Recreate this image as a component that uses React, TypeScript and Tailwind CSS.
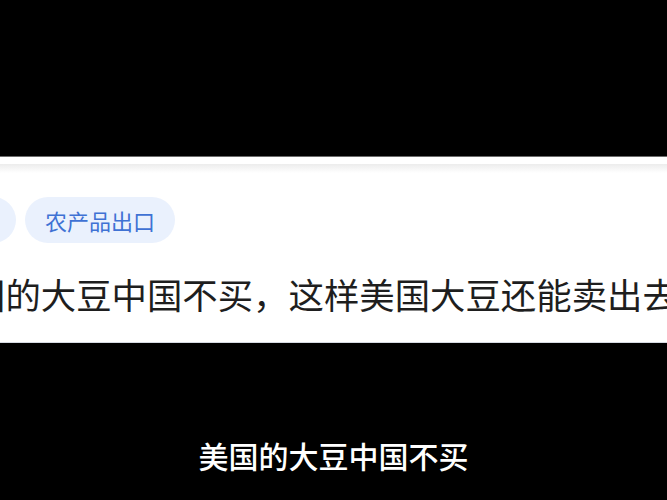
import React from "react";

export default function App() {
  const font = { fontFamily: '"Noto Sans CJK SC", "Noto Sans", sans-serif' };
  return (
    <div className="w-[667px] h-[500px] bg-black overflow-hidden relative" style={font}>
      <div className="h-[156px] bg-black" />
      <div className="h-[1px] bg-[#6b6b6b]" />
      <div className="h-[186px] bg-white overflow-hidden flex flex-col">
        <div className="h-[7px] bg-white shrink-0" />
        <div className="h-[9px] bg-gradient-to-b from-[#ececec] to-white shrink-0" />
        <div className="flex gap-[9px] ml-[-60px] mt-[24px] shrink-0">
          <div className="w-[76px] h-[46px] rounded-full bg-[#eaf1fd]" />
          <div className="h-[46px] rounded-full bg-[#eaf1fd] px-[20px] flex items-center text-[22px] text-[#3f72d4] leading-none whitespace-nowrap">
            农产品出口
          </div>
        </div>
        <div className="mt-[33px] ml-[-30px] whitespace-nowrap text-[35.4px] leading-none text-[#1e1e1e] shrink-0">
          国的大豆中国不买，这样美国大豆还能卖出去吗
        </div>
        <div className="flex-1" />
        <div className="h-[1px] bg-[#d6dae2] shrink-0" />
      </div>
      <div className="mt-[97px] text-center text-white text-[30px] leading-none font-medium">
        美国的大豆中国不买
      </div>
    </div>
  );
}
